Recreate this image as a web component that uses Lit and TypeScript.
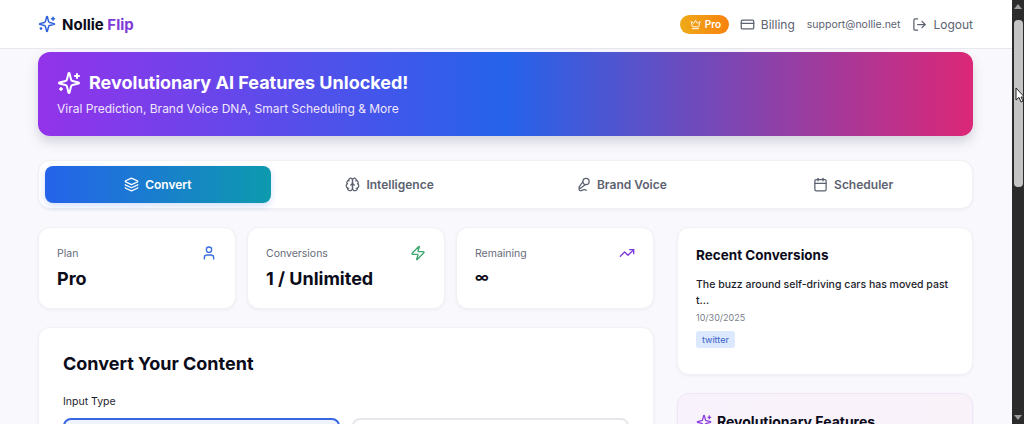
import { LitElement, html, css, svg } from "lit";
import { customElement } from "lit/decorators.js";

const icon = (body: unknown, size = 16, cls = "") => html`<svg class=${cls} width=${size} height=${size} viewBox="0 0 24 24" fill="none" stroke="currentColor" stroke-width="2" stroke-linecap="round" stroke-linejoin="round">${body}</svg>`;

const sparkles = svg`<path d="M9.94 15.5a2 2 0 0 0-1.44-1.44l-6.13-1.58a.5.5 0 0 1 0-.96l6.13-1.58A2 2 0 0 0 9.94 8.5l1.58-6.13a.5.5 0 0 1 .96 0l1.58 6.13a2 2 0 0 0 1.44 1.44l6.13 1.58a.5.5 0 0 1 0 .96l-6.13 1.58a2 2 0 0 0-1.44 1.44l-1.58 6.13a.5.5 0 0 1-.96 0z"/><path d="M20 3v4"/><path d="M22 5h-4"/><path d="M4 17v2"/><path d="M5 18H3"/>`;
const crown = svg`<path d="M11.56 3.27a.5.5 0 0 1 .88 0l2.95 5.61a1 1 0 0 0 1.52.29l4.27-3.66a.5.5 0 0 1 .8.52l-2.83 10.25a1 1 0 0 1-.96.72H6.32a1 1 0 0 1-.97-.72L2.53 6.03a.5.5 0 0 1 .8-.52L7.6 9.17a1 1 0 0 0 1.52-.29z"/><path d="M5 21h14"/>`;
const card = svg`<rect width="20" height="14" x="2" y="5" rx="2"/><line x1="2" x2="22" y1="10" y2="10"/>`;
const logout = svg`<path d="M9 21H5a2 2 0 0 1-2-2V5a2 2 0 0 1 2-2h4"/><polyline points="16 17 21 12 16 7"/><line x1="21" x2="9" y1="12" y2="12"/>`;
const layers = svg`<path d="M12.83 2.18a2 2 0 0 0-1.66 0L2.6 6.08a1 1 0 0 0 0 1.83l8.58 3.91a2 2 0 0 0 1.66 0l8.58-3.9a1 1 0 0 0 0-1.83z"/><path d="M2 12a1 1 0 0 0 .58.91l8.6 3.91a2 2 0 0 0 1.65 0l8.58-3.9A1 1 0 0 0 22 12"/><path d="M2 17a1 1 0 0 0 .58.91l8.6 3.91a2 2 0 0 0 1.65 0l8.58-3.9A1 1 0 0 0 22 17"/>`;
const brain = svg`<path d="M12 5a3 3 0 1 0-5.997.125 4 4 0 0 0-2.526 5.77 4 4 0 0 0 .556 6.588A4 4 0 1 0 12 18Z"/><path d="M12 5a3 3 0 1 1 5.997.125 4 4 0 0 1 2.526 5.77 4 4 0 0 1-.556 6.588A4 4 0 1 1 12 18Z"/><path d="M15 13a4.5 4.5 0 0 1-3-4 4.5 4.5 0 0 1-3 4"/><path d="M17.599 6.5a3 3 0 0 0 .399-1.375"/><path d="M6.003 5.125A3 3 0 0 0 6.401 6.5"/><path d="M3.477 10.896a4 4 0 0 1 .585-.396"/><path d="M19.938 10.5a4 4 0 0 1 .585.396"/><path d="M6 18a4 4 0 0 1-1.967-.516"/><path d="M19.967 17.484A4 4 0 0 1 18 18"/>`;
const mic = svg`<path d="m11 7.601-5.994 8.19a1 1 0 0 0 .1 1.298l.817.818a1 1 0 0 0 1.314.087L15.09 12"/><path d="M16.5 21.174C15.5 20.5 14.372 20 13 20c-2.058 0-3.928 2.356-6 2-2.072-.356-2.775-3.369-1.5-4.5"/><circle cx="16" cy="7" r="5"/>`;
const calendar = svg`<path d="M8 2v4"/><path d="M16 2v4"/><rect width="18" height="18" x="3" y="4" rx="2"/><path d="M3 10h18"/>`;
const user = svg`<path d="M19 21v-2a4 4 0 0 0-4-4H9a4 4 0 0 0-4 4v2"/><circle cx="12" cy="7" r="4"/>`;
const zap = svg`<path d="M4 14a1 1 0 0 1-.78-1.63l9.9-10.2a.5.5 0 0 1 .86.46l-1.92 6.02A1 1 0 0 0 13 10h7a1 1 0 0 1 .78 1.63l-9.9 10.2a.5.5 0 0 1-.86-.46l1.92-6.02A1 1 0 0 0 11 14z"/>`;
const trending = svg`<polyline points="22 7 13.5 15.5 8.5 10.5 2 17"/><polyline points="16 7 22 7 22 13"/>`;

@customElement("app-root")
export class AppRoot extends LitElement {
  static styles = css`
    :host {
      display: block;
      height: 424px;
      overflow: hidden;
      position: relative;
      font-family: Inter, "Liberation Sans", sans-serif;
      color: #0b0b1a;
    }
    .window { display: flex; height: 424px; }
    .page { flex: 1; min-width: 0; height: 424px; overflow: hidden; background: #f9f9fd; }
    .topbar {
      height: 48px;
      background: #fff;
      border-bottom: 1px solid #e8e8ee;
      display: flex;
      align-items: center;
      justify-content: space-between;
      padding: 0 39px 0 38px;
    }
    .brand { display: flex; align-items: center; gap: 6px; font-size: 15px; font-weight: 700; }
    .brand svg { color: #2f62dc; }
    .brand span span { color: #7e3ad8; }
    .nav { display: flex; align-items: center; font-size: 12px; color: #5c6270; }
    .pro {
      display: flex; align-items: center; gap: 4px;
      width: 49px; height: 19px; box-sizing: border-box; padding-left: 10px;
      border-radius: 10px;
      background: linear-gradient(90deg, #eeaa18, #f8820f);
      color: #fff; font-size: 10px; font-weight: 600;
      margin-right: 11px;
    }
    .nav-item { display: flex; align-items: center; gap: 6px; }
    .billing { margin-right: 12px; }
    .email { font-size: 10.5px; margin-right: 12px; }
    .content { padding: 3px 39px 0 38px; }
    .hero {
      height: 84px; box-sizing: border-box;
      border-radius: 12px;
      background: linear-gradient(90deg, #9333ea 0%, #2563eb 50%, #db2777 100%);
      box-shadow: 0 6px 12px rgba(40, 40, 70, 0.18);
      color: #fff;
      padding: 17px 19px;
    }
    .hero-title { display: flex; align-items: center; gap: 8px; font-size: 18px; font-weight: 700; line-height: 27px; }
    .hero-sub { font-size: 12px; margin-top: 5px; line-height: 16px; color: #f0e6fb; }
    .tabs {
      margin-top: 24px;
      height: 49px; box-sizing: border-box;
      display: grid; grid-template-columns: repeat(4, 1fr);
      column-gap: 6px;
      padding: 5px 6px;
      background: #fff;
      border: 1px solid #f0f0f5;
      border-radius: 12px;
      box-shadow: 0 1px 3px rgba(20, 20, 50, 0.06);
    }
    .tab {
      display: flex; align-items: center; justify-content: center; gap: 6px;
      font-size: 12px; font-weight: 600; color: #5c6270;
      border-radius: 8px;
    }
    .tab.active {
      background: linear-gradient(90deg, #2563eb, #0d9aae);
      color: #fff;
      box-shadow: 0 3px 7px rgba(37, 99, 235, 0.2);
    }
    .columns {
      margin-top: 18px;
      display: grid; grid-template-columns: 616px 296px; column-gap: 23px;
      align-items: start;
    }
    .left, .right { display: flex; flex-direction: column; gap: 18px; }
    .stats { display: grid; grid-template-columns: repeat(3, 198px); column-gap: 11px; }
    .panel {
      background: #fff;
      border-radius: 12px;
      border: 1px solid #f2f2f6;
      box-shadow: 0 1px 3px rgba(20, 20, 50, 0.06);
      box-sizing: border-box;
    }
    .stat { height: 82px; padding: 17px 18px; }
    .stat-head { display: flex; justify-content: space-between; align-items: center; font-size: 10.5px; color: #666c79; height: 16px; }
    .stat-value { margin-top: 4px; font-size: 18px; font-weight: 700; line-height: 28px; }
    .stat-value.small { font-size: 14px; line-height: 24px; }
    .blue { color: #3b6fe0; }
    .green { color: #3fa56f; }
    .purple { color: #7e3ad8; }
    .convert { height: 160px; padding: 23px 24px; }
    .convert h2 { margin: 0; font-size: 18px; line-height: 26px; font-weight: 700; }
    .input-label { margin-top: 17px; font-size: 10.5px; font-weight: 400; line-height: 16px; color: #1c1d2b; }
    .types { margin-top: 8px; display: grid; grid-template-columns: 277px 277px; column-gap: 12px; }
    .type { height: 60px; box-sizing: border-box; border-radius: 8px; border: 2px solid #e6e6ec; background: #fff; }
    .type.active { border-color: #3767e0; background: #eff4fe; }
    .recent { height: 148px; padding: 17px 18px; }
    .recent h3 { margin: 0; font-size: 13.5px; line-height: 20px; font-weight: 700; }
    .item { margin-top: 12px; font-size: 10.5px; line-height: 16px; font-weight: 500; color: #1c1d2b; white-space: nowrap; }
    .date { margin-top: 1px; font-size: 9px; line-height: 16px; color: #7a7f8b; }
    .chip {
      display: inline-block; margin-top: 5px; padding: 0 6px;
      height: 17px; line-height: 17px;
      background: #dbe8fd; color: #3a62c8;
      border-radius: 3px; font-size: 9px; font-weight: 400;
    }
    .features {
      height: 120px; padding: 18px;
      background: linear-gradient(90deg, #f8f2fc, #faf2f9);
      border-color: #f1e6f8;
    }
    .features h3 { margin: 0; display: flex; align-items: center; gap: 5px; font-size: 14px; line-height: 20px; font-weight: 700; }
    .features svg { color: #8a3ee0; }
    .scrollbar {
      width: 12px; height: 424px; flex: none;
      background: #2b2b2b;
      display: flex; flex-direction: column; align-items: center;
    }
    .arrow-up, .arrow-down { width: 0; height: 0; border-left: 4px solid transparent; border-right: 4px solid transparent; }
    .arrow-up { margin-top: 4px; border-bottom: 5px solid #9c9c9c; }
    .arrow-down { margin-top: auto; margin-bottom: 4px; border-top: 5px solid #9c9c9c; }
    .thumb { margin-top: 11px; width: 9px; height: 167px; border-radius: 4px; background: #c4c4c4; }
    .cursor { position: absolute; left: 1015px; top: 87px; }
  `;

  render() {
    return html`
      <div class="window">
        <div class="page">
          <header class="topbar">
            <div class="brand">${icon(sparkles, 18)}<span>Nollie <span>Flip</span></span></div>
            <nav class="nav">
              <div class="pro">${icon(crown, 11)}Pro</div>
              <div class="nav-item billing">${icon(card, 15)}Billing</div>
              <div class="email">support@nollie.net</div>
              <div class="nav-item">${icon(logout, 15)}Logout</div>
            </nav>
          </header>
          <main class="content">
            <section class="hero">
              <div class="hero-title">${icon(sparkles, 24)}Revolutionary AI Features Unlocked!</div>
              <div class="hero-sub">Viral Prediction, Brand Voice DNA, Smart Scheduling &amp; More</div>
            </section>
            <section class="tabs">
              <div class="tab active">${icon(layers, 15)}Convert</div>
              <div class="tab">${icon(brain, 15)}Intelligence</div>
              <div class="tab">${icon(mic, 15)}Brand Voice</div>
              <div class="tab">${icon(calendar, 15)}Scheduler</div>
            </section>
            <section class="columns">
              <div class="left">
                <div class="stats">
                  <div class="panel stat">
                    <div class="stat-head">Plan ${icon(user, 16, "blue")}</div>
                    <div class="stat-value">Pro</div>
                  </div>
                  <div class="panel stat">
                    <div class="stat-head">Conversions ${icon(zap, 16, "green")}</div>
                    <div class="stat-value">1 / Unlimited</div>
                  </div>
                  <div class="panel stat">
                    <div class="stat-head">Remaining ${icon(trending, 16, "purple")}</div>
                    <div class="stat-value small">∞</div>
                  </div>
                </div>
                <div class="panel convert">
                  <h2>Convert Your Content</h2>
                  <div class="input-label">Input Type</div>
                  <div class="types">
                    <div class="type active"></div>
                    <div class="type"></div>
                  </div>
                </div>
              </div>
              <div class="right">
                <div class="panel recent">
                  <h3>Recent Conversions</h3>
                  <div class="item">The buzz around self-driving cars has moved past<br />t...</div>
                  <div class="date">10/30/2025</div>
                  <span class="chip">twitter</span>
                </div>
                <div class="panel features">
                  <h3>${icon(sparkles, 16)}Revolutionary Features</h3>
                </div>
              </div>
            </section>
          </main>
        </div>
        <div class="scrollbar">
          <div class="arrow-up"></div>
          <div class="thumb"></div>
          <div class="arrow-down"></div>
        </div>
      </div>
      <svg class="cursor" width="10" height="16" viewBox="0 0 10 16"><path d="M1 1v12l3-2.6L6 15l2-1-2-4h3.4z" fill="#fff" stroke="#222" stroke-width="1"/></svg>
    `;
  }
}
